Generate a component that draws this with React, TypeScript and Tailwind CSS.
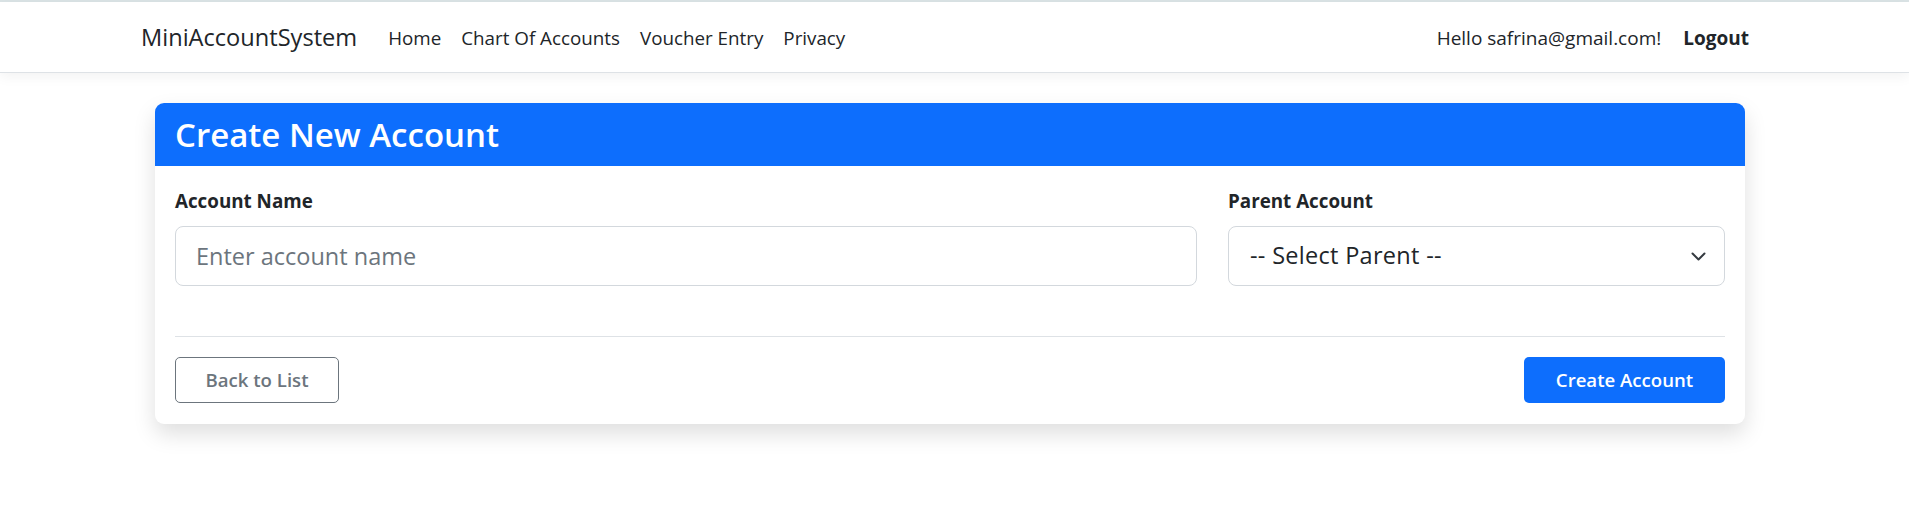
import React from "react";

export default function App() {
  return (
    <div className="min-h-[505px] bg-white text-[#212529]" style={{ fontFamily: '"Open Sans", "Noto Sans", sans-serif' }}>
      <div className="h-[2px] bg-[#dae3e5]" />
      <nav className="h-[71px] bg-white border-b border-[#dee2e6] shadow-[0_4px_12px_rgba(0,0,0,0.05)]">
        <div className="ml-[141px] w-[1618px] h-full flex items-center pt-[2px]">
          <span className="text-[23.6px] leading-none text-[#212529] mr-[31px]">MiniAccountSystem</span>
          <div className="flex items-center gap-[20px] text-[18.8px] leading-none text-[#212529]">
            <span>Home</span>
            <span>Chart Of Accounts</span>
            <span>Voucher Entry</span>
            <span>Privacy</span>
          </div>
          <div className="ml-auto flex items-center gap-[22px] text-[19px] leading-none text-[#212529] pr-[10px]">
            <span>Hello safrina@gmail.com!</span>
            <span className="font-bold">Logout</span>
          </div>
        </div>
      </nav>

      <div className="pt-[30px] pb-[60px]">
        <div className="ml-[155px] w-[1590px] bg-white rounded-[9px] shadow-[0_10px_22px_rgba(0,0,0,0.13)]">
          <div className="h-[63px] bg-[#0d6efd] rounded-t-[9px] px-[20px] flex items-center">
            <h3 className="text-[33px] font-semibold text-white leading-none">Create New Account</h3>
          </div>
          <div className="px-[20px] pt-[20px] pb-[21px]">
            <div className="grid grid-cols-[1022px_1fr] gap-x-[31px]">
              <div>
                <label className="block h-[30px] leading-[30px] text-[18.8px] font-bold text-[#212529] mb-[10px]">Account Name</label>
                <input
                  className="w-full h-[60px] border border-[#d3d8dd] rounded-[8px] px-[20px] text-[23.5px] text-[#212529] placeholder:text-[#6c757d] outline-none bg-white"
                  placeholder="Enter account name"
                />
              </div>
              <div>
                <label className="block h-[30px] leading-[30px] text-[18.8px] font-bold text-[#212529] mb-[10px]">Parent Account</label>
                <div className="w-full h-[60px] border border-[#d3d8dd] rounded-[8px] pl-[21px] pr-[18px] flex items-center justify-between bg-white">
                  <span className="text-[23.5px] tracking-[0.3px] text-[#212529]">-- Select Parent --</span>
                  <svg width="15" height="9" viewBox="0 0 15 9" fill="none">
                    <polyline points="1.5,1.5 7.5,7.5 13.5,1.5" stroke="#343a40" strokeWidth="2" strokeLinecap="round" strokeLinejoin="round" />
                  </svg>
                </div>
              </div>
            </div>
            <div className="mt-[50px] h-px bg-[#dee2e6]" />
            <div className="mt-[20px] flex items-center justify-between">
              <button className="w-[164px] h-[46px] border border-[#6c757d] rounded-[5px] text-[18.6px] font-semibold text-[#6c757d] bg-white flex items-center justify-center">
                Back to List
              </button>
              <button className="w-[201px] h-[46px] rounded-[5px] text-[18.6px] font-semibold text-white bg-[#0d6efd] flex items-center justify-center">
                Create Account
              </button>
            </div>
          </div>
        </div>
      </div>
    </div>
  );
}
